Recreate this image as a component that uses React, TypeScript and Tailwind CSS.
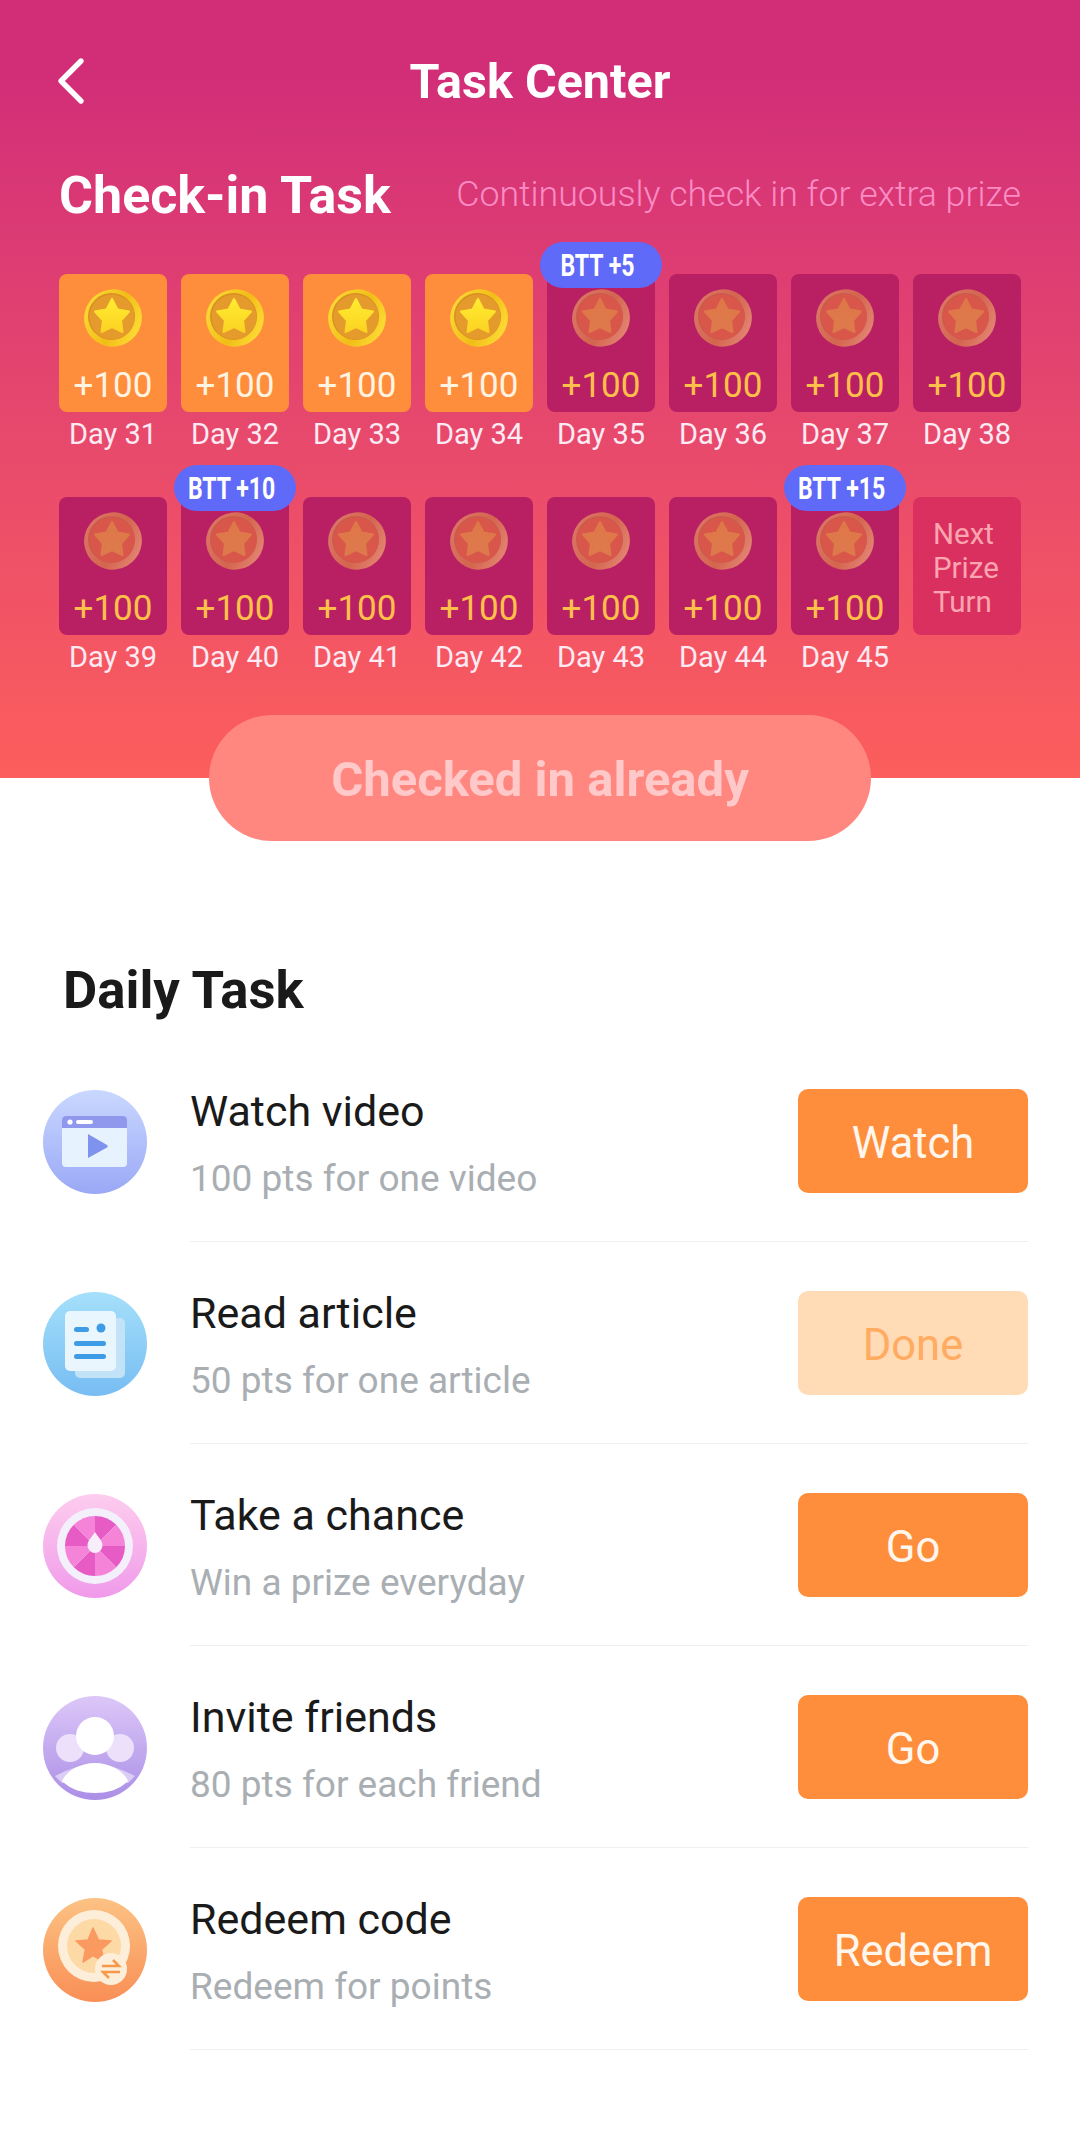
import React from "react";
import { ChevronLeft } from "lucide-react";

const roboto = "font-['Roboto',sans-serif]";

function Coin({ dim }: { dim?: boolean }) {
  const id = dim ? "d" : "g";
  return (
    <svg width="60" height="60" viewBox="0 0 60 60">
      <defs>
        <linearGradient id={id + "ring"} x1="0.15" y1="0" x2="0.85" y2="1">
          <stop offset="0" stopColor={dim ? "#dc7766" : "#fbdc36"} />
          <stop offset="0.55" stopColor={dim ? "#d4654f" : "#f1bd18"} />
          <stop offset="1" stopColor={dim ? "#e58a78" : "#ffe23a"} />
        </linearGradient>
        <linearGradient id={id + "star"} x1="0.5" y1="0" x2="0.5" y2="1">
          <stop offset="0" stopColor={dim ? "#df7748" : "#ffec30"} />
          <stop offset="1" stopColor={dim ? "#dd7a4c" : "#fcd222"} />
        </linearGradient>
      </defs>
      <ellipse cx="30" cy="30" rx="29" ry="28.500" transform="rotate(-30 30 30)" fill={`url(#${id}ring)`} />
      <circle cx="28.500" cy="28.500" r="23.500" fill={dim ? "#cc5a4a" : "#d98f22"} />
      <circle cx="29" cy="29" r="22.500" fill={dim ? "#d9574a" : "#e59a2c"} />
      <polygon
        points="29,11 34.500,21.500 46,23.500 38,32.500 39.500,44 29,39 18.500,44 20,32.500 12,23.500 23.500,21.500"
        fill={`url(#${id}star)`}
        stroke={`url(#${id}star)`}
        strokeWidth="2"
        strokeLinejoin="round"
      />
    </svg>
  );
}

function DayCard({ day, done, badge }: { day: number; done?: boolean; badge?: string }) {
  return (
    <div className="relative flex flex-col items-center">
      <div
        className={`flex h-[138px] w-[108px] flex-col items-center rounded-[8px] pt-[14px] ${
          done ? "bg-[#ff8e3c]" : "bg-[#b92064]"
        }`}
      >
        <Coin dim={!done} />
        <span className={`mt-[18px] text-[35px] leading-[40px] ${done ? "text-[#fff3e2]" : "text-[#ffc04a]"}`}>+100</span>
      </div>
      <span className="mt-[5px] text-[29px] leading-[34px] text-[#fdeaf2]">Day {day}</span>
      {badge && (
        <div className="absolute left-[-7px] top-[-32px] flex h-[46px] w-[122px] items-center justify-center rounded-full bg-[#5f6af8]">
          <span className="ml-[-7px] scale-x-[0.72] whitespace-nowrap text-[32px] font-bold leading-none text-white">{badge}</span>
        </div>
      )}
    </div>
  );
}

function NextTurn() {
  return (
    <div className="flex h-[138px] w-[108px] flex-col justify-center rounded-[8px] bg-[#d9305f] pl-[20px] pt-[4px] text-[29.500px] leading-[34px] text-[#fca4b0]">
      <span>Next</span>
      <span>Prize</span>
      <span>Turn</span>
    </div>
  );
}

function VideoIcon() {
  return (
    <svg width="104" height="104" viewBox="0 0 104 104">
      <defs>
        <linearGradient id="v1" x1="0" y1="0" x2="0" y2="1">
          <stop offset="0" stopColor="#c9d8ff" />
          <stop offset="1" stopColor="#9aa8f6" />
        </linearGradient>
      </defs>
      <circle cx="52" cy="52" r="52" fill="url(#v1)" />
      <rect x="19" y="26" width="65" height="51" rx="4" fill="#e6f3fe" />
      <path d="M19 38V30a4 4 0 0 1 4-4h57a4 4 0 0 1 4 4v8z" fill="#9098ee" />
      <circle cx="27" cy="32" r="2.600" fill="#fff" />
      <rect x="33" y="30" width="17" height="4" rx="2" fill="#fff" />
      <path d="M45 44l19 11a1.500 1.500 0 0 1 0 2.500L45 68z" fill="#7f93ee" strokeLinejoin="round" />
    </svg>
  );
}

function ArticleIcon() {
  return (
    <svg width="104" height="104" viewBox="0 0 104 104">
      <defs>
        <linearGradient id="a1" x1="0" y1="0" x2="0" y2="1">
          <stop offset="0" stopColor="#a5e0fa" />
          <stop offset="1" stopColor="#77bdf3" />
        </linearGradient>
      </defs>
      <circle cx="52" cy="52" r="52" fill="url(#a1)" />
      <rect x="32" y="26" width="50" height="60" rx="5" fill="#c2e2f7" />
      <rect x="22" y="19" width="51" height="60" rx="5" fill="#e9f6fe" />
      <rect x="31" y="35" width="15" height="5" rx="2.500" fill="#3e9be6" />
      <circle cx="58" cy="36" r="4.500" fill="#3e9be6" />
      <rect x="31" y="49" width="32" height="5" rx="2.500" fill="#3e9be6" />
      <rect x="31" y="62" width="32" height="5" rx="2.500" fill="#3e9be6" />
    </svg>
  );
}

function WheelIcon() {
  const cx = 52;
  const cy = 52;
  const r = 30;
  const slices = [0, 1, 2, 3, 4, 5, 6, 7].map((i) => {
    const a0 = (i * 45 * Math.PI) / 180 - Math.PI / 2;
    const a1 = ((i + 1) * 45 * Math.PI) / 180 - Math.PI / 2;
    return `M${cx} ${cy}L${cx + r * Math.cos(a0)} ${cy + r * Math.sin(a0)}A${r} ${r} 0 0 1 ${cx + r * Math.cos(a1)} ${cy + r * Math.sin(a1)}Z`;
  });
  return (
    <svg width="104" height="104" viewBox="0 0 104 104">
      <defs>
        <linearGradient id="w1" x1="0" y1="0" x2="0" y2="1">
          <stop offset="0" stopColor="#fdcdee" />
          <stop offset="1" stopColor="#f09aea" />
        </linearGradient>
      </defs>
      <circle cx="52" cy="52" r="52" fill="url(#w1)" />
      <circle cx="52" cy="52" r="38" fill="#f3f0fb" />
      {slices.map((d, i) => (
        <path key={i} d={d} fill={i % 2 === 0 ? "#e65bc4" : "#f583d8"} />
      ))}
      <path d="M52 38c3 5 7.500 8.500 7.500 13.500a7.500 7.500 0 0 1-15 0C44.500 46.500 49 43 52 38z" fill="#f8eefb" />
    </svg>
  );
}

function FriendsIcon() {
  return (
    <svg width="104" height="104" viewBox="0 0 104 104">
      <defs>
        <linearGradient id="f1" x1="0" y1="0" x2="0" y2="1">
          <stop offset="0" stopColor="#dcc7f8" />
          <stop offset="1" stopColor="#ab8fe6" />
        </linearGradient>
      </defs>
      <circle cx="52" cy="52" r="52" fill="url(#f1)" />
      <circle cx="27" cy="52" r="14" fill="#ece0fb" />
      <circle cx="77" cy="52" r="14" fill="#ece0fb" />
      <circle cx="52" cy="40" r="19" fill="#ffffff" />
      <path d="M12 80Q52 58 92 80L85 87H19z" fill="#dccdf5" />
      <path d="M19 85C24 74 38 67 52 67s28 7 33 18C76 94 64 97 52 97S28 94 19 85z" fill="#ffffff" />
    </svg>
  );
}

function RedeemIcon() {
  return (
    <svg width="104" height="104" viewBox="0 0 104 104">
      <defs>
        <linearGradient id="r1" x1="0" y1="0" x2="0" y2="1">
          <stop offset="0" stopColor="#fcc283" />
          <stop offset="1" stopColor="#f98f56" />
        </linearGradient>
      </defs>
      <circle cx="52" cy="52" r="52" fill="url(#r1)" />
      <circle cx="51" cy="48" r="36" fill="#fdeed9" />
      <circle cx="51" cy="48" r="27" fill="#fdd9a6" />
      <polygon
        points="50,30 55.500,42 68,43 58.500,51.500 61,64 50,57.500 40,64 42.500,51.500 33,43 45,42"
        fill="#fa9a60"
        stroke="#fa9a60"
        strokeWidth="1.500"
        strokeLinejoin="round"
      />
      <circle cx="68" cy="71" r="16" fill="#fdeed9" />
      <path d="M59 68h17l-6-6" fill="none" stroke="#f8994a" strokeWidth="2.500" />
      <path d="M77 74H60l6 6" fill="none" stroke="#f8994a" strokeWidth="2.500" />
    </svg>
  );
}

function TaskRow({
  icon,
  title,
  sub,
  action,
  done,
}: {
  icon: React.ReactNode;
  title: string;
  sub: string;
  action: string;
  done?: boolean;
}) {
  return (
    <div className="flex h-[202px] w-full">
      <div className="flex w-[190px] shrink-0 items-center pl-[43px] pt-[1px]">{icon}</div>
      <div className="mr-[52px] flex flex-1 items-center justify-between border-b border-[#efefef]">
        <div className="flex flex-col pt-[4px]">
          <span className="text-[43px] leading-[50px] text-[#1a1a1a]">{title}</span>
          <span className="mt-[22px] text-[37px] leading-[42px] text-[#a9aeb3]">{sub}</span>
        </div>
        <div
          className={`flex h-[104px] w-[230px] items-center justify-center rounded-[10px] pt-[6px] text-[43.500px] ${
            done ? "bg-[#ffdcb6] text-[#ffab62]" : "bg-[#ff8e3c] text-[#fff7ee]"
          }`}
        >
          {action}
        </div>
      </div>
    </div>
  );
}

export default function App() {
  return (
    <main className={`min-h-[2144px] w-[1080px] overflow-hidden bg-white ${roboto}`}>
      <section className="h-[778px] bg-gradient-to-b from-[#d22e78] from-[10%] to-[#fc5e5c] px-[59px]">
        <header className="relative flex h-[162px] items-center justify-center pt-[2px]">
          <ChevronLeft className="absolute left-[-28px] top-[41px] text-white" size={80} strokeWidth={1.600} />
          <h1 className="text-[48.500px] font-bold text-white">Task Center</h1>
        </header>
        <div className="flex items-center justify-between">
          <h2 className="text-[52px] font-bold leading-[68px] text-white">Check-in Task</h2>
          <p className="pb-[4px] text-[35.700px] font-light leading-[44px] text-[#fb8cc4]">Continuously check in for extra prize</p>
        </div>
        <div className="mt-[44px] grid grid-cols-8 gap-x-[14px] gap-y-[46px]">
          <DayCard day={31} done />
          <DayCard day={32} done />
          <DayCard day={33} done />
          <DayCard day={34} done />
          <DayCard day={35} badge="BTT +5" />
          <DayCard day={36} />
          <DayCard day={37} />
          <DayCard day={38} />
          <DayCard day={39} />
          <DayCard day={40} badge="BTT +10" />
          <DayCard day={41} />
          <DayCard day={42} />
          <DayCard day={43} />
          <DayCard day={44} />
          <DayCard day={45} badge="BTT +15" />
          <NextTurn />
        </div>
      </section>
      <div className="mt-[-63px] flex justify-center">
        <div className="relative flex h-[126px] w-[662px] items-center justify-center rounded-full bg-[#ff8780] pt-[4px] text-[49px] font-bold text-[#ffc9c9]">
          Checked in already
        </div>
      </div>
      <h2 className="ml-[63px] mt-[119px] text-[52.700px] font-bold leading-[60px] text-[#1a1a1a]">Daily Task</h2>
      <div className="mt-[20px] flex flex-col">
        <TaskRow icon={<VideoIcon />} title="Watch video" sub="100 pts for one video" action="Watch" />
        <TaskRow icon={<ArticleIcon />} title="Read article" sub="50 pts for one article" action="Done" done />
        <TaskRow icon={<WheelIcon />} title="Take a chance" sub="Win a prize everyday" action="Go" />
        <TaskRow icon={<FriendsIcon />} title="Invite friends" sub="80 pts for each friend" action="Go" />
        <TaskRow icon={<RedeemIcon />} title="Redeem code" sub="Redeem for points" action="Redeem" />
      </div>
    </main>
  );
}
